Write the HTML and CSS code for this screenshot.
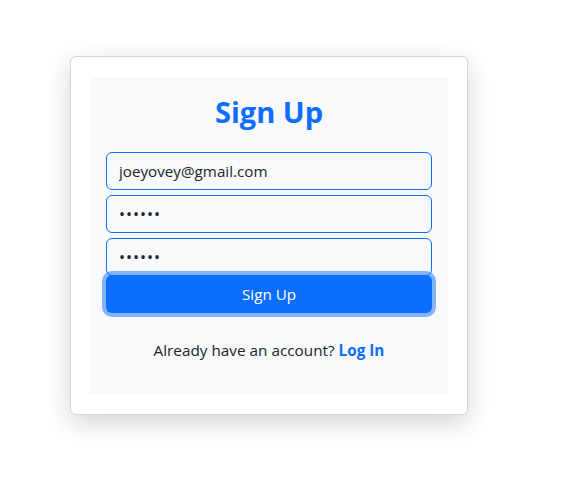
FILE: index.html
```html
<!DOCTYPE html>
<html>
<head>
<meta charset="utf-8">
<link rel="stylesheet" href="styles.css">
</head>
<body>
<div class="page">
  <div class="card">
    <div class="panel">
      <h2 class="title">Sign Up</h2>
      <form class="form">
        <input class="field" type="email" value="joeyovey@gmail.com">
        <input class="field" type="password" value="123456">
        <input class="field" type="password" value="123456">
        <button class="btn" type="button">Sign Up</button>
      </form>
      <p class="footer">Already have an account? <a class="link" href="#">Log In</a></p>
    </div>
  </div>
</div>
</body>
</html>
```
FILE: styles.css
```css
* { box-sizing: border-box; }
body {
  margin: 0;
  background: #fff;
  font-family: "Open Sans", "Noto Sans", sans-serif;
  color: #212529;
}
.page {
  padding: 56px 0 60px 70px;
  min-height: 482px;
}
.card {
  width: 398px;
  border: 1px solid #d3d5d8;
  border-radius: 6px;
  background: #fff;
  padding: 20px 19px;
  box-shadow: 0 8px 26px rgba(0,0,0,0.17);
}
.panel {
  background: #f8f9fa;
  padding: 16px 16px 1px;
}
.title {
  margin: 0 0 21px;
  text-align: center;
  color: #0d6efd;
  font-size: 29px;
  font-weight: 700;
  line-height: 38px;
}
.form {
  display: flex;
  flex-direction: column;
  gap: 5px;
}
.field {
  display: block;
  width: 100%;
  height: 38px;
  padding: 6px 12px;
  border: 1px solid #0d6efd;
  border-radius: 6px;
  background: #f8f9fa;
  font-family: inherit;
  font-size: 15.2px;
  color: #212529;
  outline: none;
}
.field[type="password"] { font-size: 16px; letter-spacing: 1px; }
.btn {
  margin-top: -6px;
  height: 38px;
  width: 100%;
  border: 0;
  border-radius: 6px;
  background: #0d6efd;
  color: #fff;
  font-family: inherit;
  font-size: 15.2px;
  box-shadow: 0 0 0 4px rgba(13,110,253,0.5);
}
.footer {
  margin: 25px 0 31px;
  text-align: center;
  font-size: 15.3px;
  line-height: 24px;
}
.link {
  color: #0d6efd;
  font-weight: 700;
  text-decoration: none;
}
```
